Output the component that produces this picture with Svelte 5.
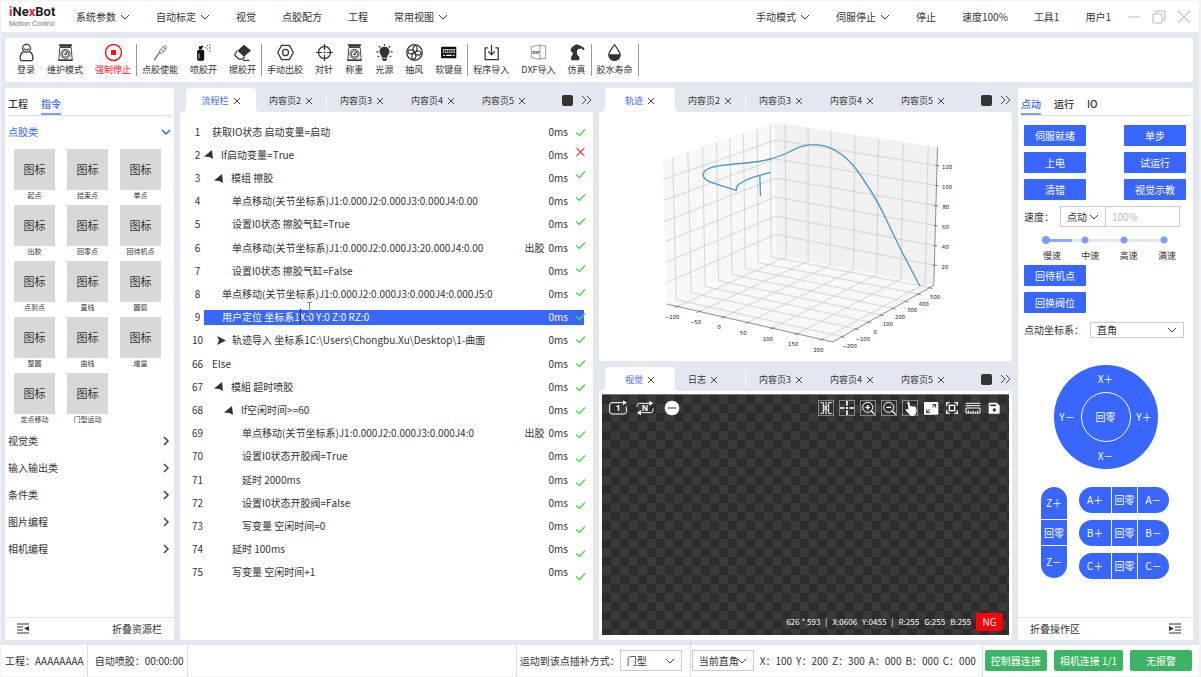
<script>
  const commands = ['起点', '结束点', '单点', '出胶', '回零点', '回待机点', '点到点', '直线', '圆弧', '整圆', '曲线', '增量', '定点移动', '门型运动'];
  const categories = ['视觉类', '输入输出类', '条件类', '图片编程', '相机编程'];

  const menuLeft = [
    { label: '系统参数', drop: true },
    { label: '自动标定', drop: true },
    { label: '视觉' },
    { label: '点胶配方' },
    { label: '工程' },
    { label: '常用视图', drop: true }
  ];
  const menuRight = [
    { label: '手动模式', drop: true },
    { label: '伺服停止', drop: true },
    { label: '停止' },
    { label: '速度100%' },
    { label: '工具1' },
    { label: '用户1' }
  ];

  const toolGroups = [
    [['user', '登录'], ['scale', '维护模式'], ['stop', '强制停止']],
    [['whisk', '点胶使能'], ['spray', '喷胶开'], ['eraser', '擦胶开']],
    [['hex', '手动出胶'], ['target', '对针'], ['scale', '称重'], ['bulb', '光源'], ['fan', '抽风'], ['keyboard', '软键盘']],
    [['import', '程序导入'], ['dxf', 'DXF导入'], ['robot', '仿真']],
    [['drop', '胶水寿命']]
  ];

  const steps = [
    { no: 1, level: 0, text: '获取IO状态 启动变量=启动' },
    { no: 2, level: 1, arrow: 'open', text: 'lf启动变量=True', fail: true },
    { no: 3, level: 2, arrow: 'open', text: '模组 擦胶' },
    { no: 4, level: 2, text: '单点移动(关节坐标系)J1:0.000J2:0.000J3:0.000J4:0.00' },
    { no: 5, level: 2, text: '设置I0状态 擦胶气缸=True' },
    { no: 6, level: 2, text: '单点移动(关节坐标系)J1:0.000J2:0.000J3:20.000J4:0.00', glue: true },
    { no: 7, level: 2, text: '设置I0状态 擦胶气缸=False' },
    { no: 8, level: 1, text: '单点移动(关节坐标系)J1:0.000J2:0.000J3:0.000J4:0.000J5:0' },
    { no: 9, level: 1, text: '用户定位 坐标系1', rest: 'X:0 Y:0 Z:0 RZ:0', selected: true },
    { no: 10, level: 2, arrow: 'closed', text: '轨迹导入 坐标系1C:\\Users\\Chongbu.Xu\\Desktop\\1-曲面' },
    { no: 66, level: 0, text: 'Else' },
    { no: 67, level: 2, arrow: 'open', text: '模組 超时喷胶' },
    { no: 68, level: 3, arrow: 'open', text: 'lf空闲时间>=60' },
    { no: 69, level: 3, text: '单点移动(关节坐标系)J1:0.000J2:0.000J3:0.000J4:0', glue: true },
    { no: 70, level: 3, text: '设置I0状态开胶阀=True' },
    { no: 71, level: 3, text: '延时 2000ms' },
    { no: 72, level: 3, text: '设置I0状态开胶阀=False' },
    { no: 73, level: 3, text: '写变量 空闲时间=0' },
    { no: 74, level: 2, text: '延时 100ms' },
    { no: 75, level: 2, text: '写变量 空闲时间+1' }
  ];

  const leftWall = [[220, 230], [265, 275], [309, 317], [351, 357], [391, 397], [432, 437], [473, 476], [512, 515]];
  const rightWall = [[557, 560], [626, 626], [695, 692], [766, 762], [837, 832], [911, 905], [986, 977]];
  const zLines = [[192, 275, 156, 1013, 233], [194, 337, 213, 1011, 293], [196, 400, 270, 1009, 353], [198, 461, 327, 1008, 413], [199, 523, 384, 1006, 473], [200, 585, 439, 1005, 532]];
  const frontX = [[233, 656], [300, 671], [372, 688], [445, 704], [518, 721], [593, 738], [668, 755]];
  const frontY = [[728, 746], [770, 723], [808, 702], [845, 681], [881, 661], [919, 640], [957, 618], [991, 599]];
  const topLeft = (x) => 217 - (x - 190) * 0.3353;
  const bottomLeft = (x) => 648 - (x - 201) * 0.451;
  const topRight = (x) => 104 + (x - 527) * 0.152;
  const bottomRight = (x) => 500 + (x - 529) * 0.194;
  const axisLabels = [
    ['−100', 218, 692], ['−50', 288, 707], ['0', 359, 723], ['50', 431, 740], ['100', 505, 758], ['150', 581, 775], ['200', 657, 793],
    ['−200', 750, 781], ['−100', 790, 759], ['0', 827, 737], ['100', 865, 715], ['200', 902, 693], ['300', 938, 672], ['400', 973, 653], ['500', 1007, 634],
    ['120', 1043, 242], ['100', 1043, 303], ['80', 1039, 363], ['60', 1038, 423], ['40', 1037, 483], ['20', 1036, 542]
  ];

  const jogRows = ['A', 'B', 'C'];
  const camTools = ['镜像', '十字线', '放大', '缩小', '平移', '适应窗口', '对焦', '测量', '保存'];
  const coords = ['X：100', 'Y：200', 'Z：300', 'A：000', 'B：000', 'C：000'];
</script>

{#snippet chevron()}
  <svg class="chev" viewBox="0 0 10 10" aria-hidden="true"><path d="M1 3l4 4 4-4" /></svg>
{/snippet}

{#snippet cross()}
  <svg class="cross" viewBox="0 0 8 8" aria-hidden="true"><path d="M1 1l6 6M7 1l-6 6" /></svg>
{/snippet}

{#snippet tabStrip(tabs)}
  <div class="strip">
    {#each tabs as name, i}
      <div class="tab" class:active={i === 0} class:split={i === 1}>
        <button>{name}</button>
        <button aria-label="关闭">{@render cross()}</button>
      </div>
    {/each}
    <div class="strip-end">
      <button class="block" aria-label="单窗口"></button>
      <button aria-label="更多"><svg class="more" viewBox="0 0 11 10" aria-hidden="true"><path d="M1 1l4 4-4 4M6 1l4 4-4 4" /></svg></button>
    </div>
  </div>
{/snippet}

{#snippet select(label, value)}
  <span class="select">
    <select aria-label={label}><option>{value}</option></select>
    {@render chevron()}
  </span>
{/snippet}

{#snippet toolIcon(name)}
  <svg class="tool-icon" viewBox="0 0 48 48" aria-hidden="true">
    {#if name === 'user'}
      <g class="ln"><circle cx="24" cy="12" r="11" /><path d="M17 13q7 7 14 0M16 22C9 24 6 33 6 40q0 7 6 7h24q6 0 6-7c0-7-3-16-10-18" /></g>
    {:else if name === 'scale'}
      <g class="ln thin"><path d="M6 2h36l-4 6H10zM8 10h32l3 36H5z" /><circle cx="24" cy="28" r="13" /><circle cx="24" cy="28" r="9" /><path d="M24 29l6-8M14 8v3M34 8v3" stroke-width="3" /></g>
      <path d="M6 2h36l-3 5H9zM4 44h40v4H4z" /><circle cx="24" cy="29" r="3" />
    {:else if name === 'stop'}
      <circle cx="24" cy="24" r="22.5" fill="none" stroke="#ff0d16" stroke-width="4" /><rect x="17" y="17" width="14" height="14" fill="#ff0d16" />
    {:else if name === 'whisk'}
      <g class="ln hair"><path d="M6 46l13-19" stroke-width="4" /><path d="M19 27c0-8 10-18 18-22 4 0 5 3 4 6-3 9-12 18-22 16zM19 27C22 17 30 8 38 5M19 27c9-2 17-10 21-18M26 15l8 7M31 9l7 6" /></g>
    {:else if name === 'spray'}
      <path d="M6 21q0-5 5-5h10q5 0 5 5v22q0 4-4 4H10q-4 0-4-4zM11 6h9v9h-9zM18 5h5v5h-5z" fill="#111" />
      <path d="M10 27h3v14h-3z" fill="#bbb" />
      <g fill="#777"><circle cx="29" cy="10" r="2.3" /><circle cx="35" cy="5" r="2.3" /><circle cx="35" cy="14" r="2.3" /><circle cx="42" cy="3" r="2.3" /><circle cx="42" cy="11" r="2.3" /><circle cx="42" cy="20" r="2.3" /></g>
    {:else if name === 'eraser'}
      <path d="M28 2L48 18 28 36 10 19z" /><path class="ln" d="M9 19L3 28q-1 3 1 5l10 10h10l6-7M26 46h17" />
    {:else if name === 'hex'}
      <path class="ln" d="M13 4h22l11 20-11 20H13L2 24z" stroke-linejoin="round" /><circle class="ln" cx="24" cy="24" r="8.5" />
    {:else if name === 'target'}
      <circle class="ln" cx="24" cy="24" r="17" /><path class="ln" d="M24 0v17M24 31v17M0 24h17M31 24h17" /><circle cx="24" cy="24" r="3" />
    {:else if name === 'bulb'}
      <path d="M24 8c8 0 14 6 14 13 0 6-4 9-6 14v4H16v-4c-2-5-6-8-6-14C10 14 16 8 24 8zM17 41h14v3l-4 4h-6l-4-4z" />
      <path class="ln" d="M24 0v5M8 6l4 4M40 6l-4 4M1 22h6M41 22h6M5 37l4-3M43 37l-4-3" />
    {:else if name === 'fan'}
      <circle class="ln" cx="24" cy="24" r="22" /><g class="ln"><path d="M24 22C18 16 18 8 26 5c8 2 6 10 2 17M26 24c6-6 14-6 17 2-2 8-10 6-17 2M24 26c6 6 6 14-2 17-8-2-6-10-2-17M22 24C16 30 8 30 5 22c2-8 10-6 17-2" /></g><circle cx="24" cy="24" r="4" />
    {:else if name === 'keyboard'}
      <rect x="3" y="8" width="43" height="32" rx="2" fill="#111" />
      <path d="M8 16h34M8 23h34" stroke="#fff" stroke-width="4" stroke-dasharray="4 2" /><path d="M9 32h5M17 32h16M36 32h5" stroke="#fff" stroke-width="4" />
    {:else if name === 'import'}
      <path class="ln" d="M14 11H6v33h37V11h-8M24 2v27M15 21l9 9 9-9" />
    {:else if name === 'dxf'}
      <g class="ln hair"><path d="M4 8l24-6v42L4 38zM28 5h16v36H28" /></g><text x="6" y="28" font-size="11" font-weight="700">DXF</text>
    {:else if name === 'robot'}
      <path d="M14 6l10-5 10 3 12 7v5l-4 1-3-4-10 1-4 6 1 10 6 6v10H9V36l5-8-3-6-4-2 2-8z" />
    {:else if name === 'drop'}
      <path class="ln" d="M24 2C17 13 8 21 8 31a16 15 0 0 0 32 0C40 21 31 13 24 2z" /><path d="M8 29h32c1 11-7 18-16 18S7 40 8 29z" />
    {/if}
  </svg>
{/snippet}

{#snippet camIcon(i)}
  <svg class="cam-icon" viewBox="0 0 48 48" aria-hidden="true">
    {#if i < 5}<rect x="1" y="1" width="46" height="46" class="frame" />{/if}
    {#if i === 0}
      <path d="M7 8h9v32H7M41 8h-9v32h9M24 5v38M16 16l14 16M30 16L16 32" />
    {:else if i === 1}
      <path d="M24 3v14M24 31v14M3 24h14M31 24h14M24 21v6M21 24h6" stroke-width="5" />
    {:else if i === 2}
      <circle cx="23" cy="22" r="15" /><path d="M34 33l10 11M16 22h14M23 15v14" stroke-width="4" />
    {:else if i === 3}
      <circle cx="23" cy="22" r="15" /><path d="M34 33l10 11M16 22h14" stroke-width="4" />
    {:else if i === 4}
      <path class="solid" d="M16 6q4-3 6 1l3 13 4-2 4 2 5-1 3 3 3 9-2 10-6 6H26L12 32q-3-4 1-6l7 3z" />
    {:else if i === 5}
      <rect class="solid" x="3" y="6" width="43" height="38" rx="3" /><path class="cut" d="M28 14h10v9M38 14L28 22M11 28v9h10M11 37l9-8" />
    {:else if i === 6}
      <path d="M8 17V8h9M31 8h9v9M40 31v9h-9M17 40H8v-9" stroke-width="4" /><rect x="16" y="16" width="16" height="16" stroke-width="4" />
    {:else if i === 7}
      <path d="M2 10h44M2 17h44M3 24h42v15H3zM10 31v8M17 34v5M24 31v8M31 34v5M38 31v8" />
    {:else}
      <path class="solid" d="M8 8h24l9 9v24H8z" /><path class="cut" d="M13 16h17" stroke-width="5" /><circle class="hole" cx="25" cy="30" r="5" />
    {/if}
  </svg>
{/snippet}

<div class="app">
  <header>
    <div class="logo">
      <strong><i>i</i>Ne<i>x</i>Bot</strong>
      <small>Motion Control</small>
    </div>
    <nav>
      {#each menuLeft as item}
        <button class="menu">{item.label}{#if item.drop}{@render chevron()}{/if}</button>
      {/each}
    </nav>
    <nav class="right">
      {#each menuRight as item}
        <button class="menu">{item.label}{#if item.drop}{@render chevron()}{/if}</button>
      {/each}
    </nav>
    <div class="window">
      <button aria-label="最小化"><svg viewBox="0 0 14 14"><path d="M1 7h12" /></svg></button>
      <button aria-label="还原"><svg viewBox="0 0 14 14"><path d="M1 4h9v9H1zM4 4V1h9v9h-3" /></svg></button>
      <button aria-label="关闭"><svg viewBox="0 0 14 14"><path d="M1 1l12 12M13 1L1 13" /></svg></button>
    </div>
  </header>

  <main>
    <section class="toolbar">
      {#each toolGroups as group}
        <div class="group">
          {#each group as [icon, label]}
            <button class="tool" class:danger={icon === 'stop'}>{@render toolIcon(icon)}<span>{label}</span></button>
          {/each}
        </div>
      {/each}
    </section>

    <div class="columns">
      <aside class="card">
        <div class="side-tabs">
          <button>工程</button>
          <button class="on">指令</button>
        </div>
        <button class="cat open">点胶类<svg class="cat-arrow" viewBox="0 0 10 10" aria-hidden="true"><path d="M1 3l4 4 4-4" /></svg></button>
        <div class="tiles">
          {#each commands as c}
            <button class="tile"><b>图标</b><span>{c}</span></button>
          {/each}
        </div>
        {#each categories as c}
          <button class="cat">{c}<svg class="cat-arrow" viewBox="0 0 10 10" aria-hidden="true"><path d="M3 1l4 4-4 4" /></svg></button>
        {/each}
        <button class="fold">
          <svg viewBox="0 0 12 12" aria-hidden="true"><path d="M0 1h12M0 4h6M0 7h6M0 10h12" /><path class="tri" d="M12 3v5L7 5.500z" /></svg>
          折叠资源栏
        </button>
      </aside>

      <section class="panel">
        {@render tabStrip(['流程栏', '内容页2', '内容页3', '内容页4', '内容页5'])}
        <div class="body program">
          <div class="rows">
            {#each steps as s}
              <div class="row" class:selected={s.selected}>
                <span class="no">{s.no}</span>
                <div class="line" class:arrowed={s.arrow} style:--level={s.level}>
                  {#if s.arrow === 'open'}
                    <svg class="arrow" viewBox="0 0 9 9" aria-hidden="true"><path d="M8 0l1 9-3.500-2L0 6.500z" /></svg>
                  {:else if s.arrow}
                    <svg class="arrow closed" viewBox="0 0 9 9" aria-hidden="true"><path d="M0 0l9 4.500L0 9l2-4.500z" /></svg>
                  {/if}
                  <span class="text">{s.text}{#if s.rest}<span class="caret"><svg viewBox="0 0 5 14" aria-hidden="true"><path d="M0 .5h5M2.500 0v14M0 13.500h5" /></svg></span>{s.rest}{/if}</span>
                  {#if s.glue}<span class="glue">出胶</span>{/if}
                  <span class="ms">0ms</span>
                </div>
              </div>
            {/each}
          </div>
          <div class="states">
            {#each steps as s, i}
              <span class:early={i < 2}>
                {#if s.fail}
                  <svg class="bad" viewBox="0 0 10 10" role="img" aria-label="失败"><path d="M1 1l8 8M9 1L1 9" /></svg>
                {:else}
                  <svg class="good" viewBox="0 0 10 10" role="img" aria-label="完成"><path d="M.5 5.500L4 8.500l5.500-6" /></svg>
                {/if}
              </span>
            {/each}
          </div>
        </div>
      </section>

      <div class="stack">
        <section class="panel">
          {@render tabStrip(['轨迹', '内容页2', '内容页3', '内容页4', '内容页5'])}
          <div class="body">
            <svg class="plot" viewBox="0 72 1236 744" role="img" aria-label="轨迹">
              <path class="wall" d="M190 217L527 104l2 396-328 148z" />
              <path class="wall dark" d="M527 104l487 74-11 414-474-92z" />
              <path class="wall" d="M201 648l328-148 474 92-303 170z" />
              <g class="gridlines">
                {#each leftWall as [a, b], i}
                  <path d="M{a} {topLeft(a)}L{b} {bottomLeft(b)}L{frontY[i][0]} {frontY[i][1]}" />
                {/each}
                {#each rightWall as [a, b], i}
                  <path d="M{a} {topRight(a)}L{b} {bottomRight(b)}L{frontX[i][0]} {frontX[i][1]}" />
                {/each}
                {#each zLines as [lx, ly, my, rx, ry]}
                  <path d="M{lx} {ly}L528 {my}L{rx} {ry}" />
                {/each}
              </g>
              <path class="axis" d="M201 648l499 114 303-170 11-414" />
              {#each frontX as [x, y]}<path class="axis" d="M{x + 5} {y - 3}l-12 6" />{/each}
              {#each frontY as [x, y]}<path class="axis" d="M{x - 4} {y - 1}l12 4" />{/each}
              {#each zLines as z}<path class="axis" d="M{z[3] - 5} {z[4] - 1}l12 2" />{/each}
              <path class="curve" d="M961 594L905 487C880 435 866 408 850 373C826 325 800 285 770 243C735 200 690 170 645 170C590 170 570 200 512 213C470 225 420 226 378 231C335 235 310 246 311 262C316 283 345 285 410 307C412 296 410 292 420 288C440 274 455 268 481 262L512 253M481 262L483 324" />
              {#each axisLabels as [t, x, y]}<text {x} {y}>{t}</text>{/each}
            </svg>
          </div>
        </section>

        <section class="panel">
          {@render tabStrip(['视觉', '日志', '内容页3', '内容页4', '内容页5'])}
          <div class="body cam-body">
            <div class="camera">
              <div class="cam-bar">
                <button aria-label="单次运行"><svg class="loop" viewBox="0 0 54 48"><path d="M44 8H9q-7 0-7 7v20q0 7 7 7h36q7 0 7-7V20" /><path class="solid" d="M42 1l12 7-12 7z" /><text x="27" y="33">1</text></svg></button>
                <button aria-label="连续运行"><svg class="loop" viewBox="0 0 54 48"><path d="M3 21v-4q0-7 8-7h32M51 25v6q0 7-8 7H12" /><path class="solid" d="M40 2l12 8-12 7zM15 30L3 38l12 8z" /><text x="27" y="33">N</text></svg></button>
                <button aria-label="清除"><svg class="loop" viewBox="0 0 54 48"><circle class="solid" cx="27" cy="24" r="22" /><path class="cut" d="M15 24h24" /></svg></button>
                <div class="cam-tools">
                  {#each camTools as t, i}<button aria-label={t}>{@render camIcon(i)}</button>{/each}
                </div>
              </div>
              <div class="cam-info">
                <span>626 * 593</span><span>|</span><span>X:0606</span><span>Y:0455</span><span>|</span><span>R:255</span><span>G:255</span><span>B:255</span>
                <strong>NG</strong>
              </div>
            </div>
          </div>
        </section>
      </div>

      <aside class="card control">
        <div class="side-tabs">
          <button class="on">点动</button>
          <button>运行</button>
          <button>IO</button>
        </div>
        <div class="pairs">
          <button>伺服就绪</button><button>单步</button>
          <button>上电</button><button>试运行</button>
          <button>清错</button><button>视觉示教</button>
        </div>
        <div class="speed">
          <label for="rate">速度：</label>
          {@render select('速度模式', '点动')}
          <input id="rate" placeholder="100%" />
        </div>
        <div class="slider">
          <input type="range" min="0" max="3" value="0" aria-label="速度档位" />
          <div class="marks"><span>慢速</span><span>中速</span><span>高速</span><span>满速</span></div>
        </div>
        <div class="pairs"><button>回待机点</button><i></i><button>回换阀位</button></div>
        <div class="frame-row">
          <span>点动坐标系：</span>
          {@render select('点动坐标系', '直角')}
        </div>
        <div class="dial">
          <button class="n">X＋</button>
          <button class="w">Y－</button>
          <button class="c">回零</button>
          <button class="e">Y＋</button>
          <button class="s">X－</button>
        </div>
        <div class="jogs">
          <div class="jog-z"><button>Z＋</button><button>回零</button><button>Z－</button></div>
          <div class="jog-list">
            {#each jogRows as a}
              <div class="jog"><button>{a}＋</button><button>回零</button><button>{a}－</button></div>
            {/each}
          </div>
        </div>
        <button class="fold">
          折叠操作区
          <svg viewBox="0 0 12 12" aria-hidden="true"><path d="M0 1h12M6 4h6M6 7h6M0 10h12" /><path class="tri" d="M0 3v5l5-2.500z" /></svg>
        </button>
      </aside>
    </div>
  </main>

  <footer>
    <span class="cell">工程：AAAAAAAA</span>
    <span class="cell wide">自动喷胶：00:00:00</span>
    <div class="cell motion"><span>运动到该点插补方式：</span>{@render select('插补方式', '门型')}</div>
    <div class="cell position">
      {@render select('坐标系', '当前直角')}
      <div class="coords">{#each coords as c}<span>{c}</span>{/each}</div>
    </div>
    <div class="links">
      <button>控制器连接</button>
      <button>相机连接 1/1</button>
      <button>无报警</button>
    </div>
  </footer>
</div>

<style>
  :global(body) { background: #f1f2f4; }
  .app {
    --blue: #3866ff;
    --bg: #e3e8f0;
    box-sizing: border-box;
    display: flex;
    flex-direction: column;
    min-height: 100vh;
    padding: 1px 2px 1px 1px;
    background: #f1f2f4;
    color: #333;
    font: 10px/14px "Noto Sans CJK SC", "Noto Sans", sans-serif;
    font-kerning: none;
  }
  .app :is(button, input, select) {
    box-sizing: border-box;
    margin: 0;
    padding: 0;
    border: 0;
    background: none;
    color: inherit;
    font: inherit;
    font-kerning: none;
    white-space: nowrap;
  }
  svg { display: block; flex: none; }
  .chev, .cross, .more, .cat-arrow { fill: none; stroke: #444; stroke-width: 1; }
  .chev { width: 10px; height: 10px; }
  .cross { width: 8px; height: 8px; }

  header { display: flex; align-items: center; height: 31px; padding: 0 8px; background: #fff; }
  .logo { display: flex; flex-direction: column; width: 67px; margin-bottom: 2px; color: #222; }
  .logo strong { font: 700 13px/16px Roboto, sans-serif; }
  .logo i { color: #e8202a; font-style: normal; }
  .logo small { color: #777; font: 7px/8px "Liberation Sans", sans-serif; }
  nav { display: flex; gap: 26px; }
  nav.right { margin-left: auto; }
  .app .menu { display: flex; align-items: center; gap: 4px; }
  .window { display: flex; gap: 11px; margin-left: 16px; }
  .window svg { width: 14px; height: 14px; fill: none; stroke: #bbb; }

  main { display: flex; flex: 1; flex-direction: column; gap: 6px; padding: 6px 6px 5px 4px; background: var(--bg); }
  .toolbar { display: flex; align-items: center; height: 44px; padding-left: 7px; border-radius: 2px; background: #fff; }
  .group { display: flex; gap: 12px; height: 32px; padding: 0 5px; border-right: 1px solid #999; }
  .app .tool { display: flex; flex-direction: column; align-items: center; gap: 3px; font-size: 9px; line-height: 12px; }
  .tool-icon { width: 17px; height: 17px; overflow: visible; fill: #333; }
  .ln { fill: none; stroke: #333; stroke-width: 3.500; }
  .thin { stroke-width: 2.500; }
  .hair { stroke: #777; stroke-width: 2; }
  .app .danger { color: #ff0d16; }

  .columns { display: grid; flex: 1; grid-template-columns: 169px minmax(0, 1fr) minmax(0, 1fr) 175px; gap: 6px; }
  .card { display: flex; flex-direction: column; border-radius: 2px; background: #fff; }
  .side-tabs { display: flex; gap: 13px; margin: 0 3px; padding-top: 8px; border-bottom: 1px solid #ddd; }
  .app .side-tabs button { height: 19px; padding-bottom: 1px; border-bottom: 2px solid transparent; font-weight: 500; }
  .app .side-tabs .on { border-color: #7f9dff; color: var(--blue); }
  .app .cat { display: flex; align-items: center; justify-content: space-between; height: 27px; padding: 0 3px; }
  .app .cat.open { height: 32px; color: var(--blue); }
  .cat-arrow { width: 10px; height: 10px; stroke-width: 1.500; }
  .open .cat-arrow { stroke: var(--blue); }
  .tiles { display: grid; grid-template-columns: repeat(3, 41px); justify-content: space-between; row-gap: 5px; margin: 1px 13px 3px 9px; }
  .app .tile { display: flex; flex-direction: column; align-items: center; height: 51px; font-size: 7px; line-height: 10px; }
  .tile b { width: 41px; height: 41px; background: #d8d8d8; font-size: 11px; font-weight: 400; line-height: 41px; }
  .app .fold { display: flex; align-items: center; justify-content: space-between; height: 23px; margin-top: auto; padding: 0 12px 1px; border-top: 1px solid #e4e6ea; }
  .fold svg { width: 12px; height: 12px; fill: none; stroke: #333; }
  .fold .tri { fill: #333; stroke: none; }

  .stack { display: flex; flex-direction: column; gap: 6px; }
  .stack .panel { flex: 1; }
  .panel { display: flex; flex-direction: column; min-width: 0; }
  .strip { display: flex; height: 24px; padding-left: 6px; font-size: 9px; }
  .tab { position: relative; box-sizing: border-box; display: flex; flex: 0 1 71px; align-items: center; gap: 4px; padding: 2px 0 0 13px; }
  .tab.active { flex-basis: 70px; justify-content: center; padding-left: 0; border-radius: 4px 4px 0 0; background: #fff; color: var(--blue); }
  .tab.active::before, .tab.active::after { position: absolute; bottom: 0; width: 4px; height: 4px; content: ""; }
  .tab.active::before { right: 100%; background: radial-gradient(circle at 0 0, transparent 4px, #fff 4px); }
  .tab.active::after { left: 100%; background: radial-gradient(circle at 100% 0, transparent 4px, #fff 4px); }
  .tab.split::after { position: absolute; top: 5px; right: 0; width: 1px; height: 15px; background: #f7f8fa; content: ""; }
  .strip-end { display: flex; align-items: center; gap: 8px; margin-left: auto; padding-right: 1px; }
  .app .block { width: 11px; height: 11px; border-radius: 2px; background: #333; }
  .more { width: 11px; height: 10px; }
  .body { flex: 1; min-height: 0; border-radius: 2px; background: #fff; }

  .program { display: grid; padding: 8px 0 56px; }
  .rows, .states { display: flex; grid-area: 1 / 1; flex-direction: column; }
  .row { display: flex; flex: 1; align-items: center; padding-right: 9px; }
  .no { width: 13px; padding-left: 11px; text-align: center; }
  .line { display: flex; flex: 1; align-items: center; height: 15px; padding: 0 16px 0 calc(8px + var(--level) * 10px); white-space: nowrap; }
  .line.arrowed { padding-left: calc((var(--level) - 1) * 10px); }
  .arrow { width: 9px; height: 9px; margin-right: 8px; fill: #333; }
  .arrow.closed { margin: 0 6px 0 3px; }
  .text { flex: 1; }
  .glue { margin-right: 4px; }
  .selected .line { background: var(--blue); color: #fff; }
  .caret { position: relative; border-left: 1px solid #334; margin-right: -1px; }
  .caret svg { position: absolute; top: -7px; left: 6px; width: 5px; height: 14px; fill: none; stroke: #888; }
  .states { justify-self: end; width: 18px; margin: 2px 0 -4px; }
  .states span { display: flex; flex: 237 1 0; align-items: center; }
  .states .early { flex-grow: 200; }
  .states svg { width: 11px; height: 10px; fill: none; stroke: #4ad64f; stroke-width: 1.300; }
  .states .bad { stroke: #f04a4a; stroke-width: 1.200; }

  .plot { width: 100%; height: 248px; min-height: 0; }
  .wall { fill: #f8f8f8; }
  .wall.dark { fill: #f1f1f1; }
  .gridlines { fill: none; stroke: #c4c4c4; stroke-width: 2; }
  .axis { fill: none; stroke: #555; stroke-width: 2; }
  .curve { fill: none; stroke: #4c97cb; stroke-width: 4; }
  .plot text { fill: #222; font: 16px "DejaVu Sans", sans-serif; text-anchor: middle; }

  .cam-body { display: flex; padding: 3px 3px 5px; }
  .camera {
    display: flex;
    flex: 1;
    flex-direction: column;
    justify-content: space-between;
    border-top: 1px solid #777;
    background: repeating-conic-gradient(#3a3a3a 0 25%, #2d2d2d 0 50%) 0 0 / 18px 18px;
    color: #fff;
  }
  .cam-bar { display: flex; gap: 9px; padding: 5px 7px; }
  .cam-tools { display: flex; gap: 5px; margin-left: auto; }
  .loop { width: 18px; height: 16px; }
  .cam-icon { width: 16px; height: 16px; }
  .loop, .cam-icon { fill: none; stroke: #fff; stroke-width: 3; }
  .loop text { fill: #fff; stroke: none; font: 700 24px "Noto Sans", sans-serif; text-anchor: middle; }
  .frame { stroke: #aaa; stroke-width: 2; }
  .solid { fill: #fff; stroke: none; }
  .cut { fill: none; stroke: #2d2d2d; }
  .hole { fill: #2d2d2d; stroke: none; }
  .cam-info { display: flex; align-items: center; justify-content: flex-end; gap: 5px; padding: 3px 6px 4px; font-size: 8px; }
  .cam-info strong { width: 27px; border-radius: 1px; background: red; font-size: 10px; font-weight: 400; line-height: 18px; text-align: center; }

  .pairs { display: grid; grid-template-columns: 62px 62px; justify-content: space-between; gap: 6px; padding: 0 7px 0 6px; }
  .side-tabs + .pairs { padding-top: 9px; }
  .app .pairs button { height: 21px; border-radius: 1px; background: var(--blue); color: #fff; }
  .pairs button:last-child:nth-child(3) { grid-column: 1; }
  .speed { display: flex; height: 21px; margin: 6px 13px 0 6px; align-items: center; }
  .speed label { flex: 1; }
  .select { display: grid; align-items: center; height: 21px; }
  .select > :global(*) { grid-area: 1 / 1; }
  .select .chev { justify-self: end; margin-right: 7px; pointer-events: none; }
  .app .select select { width: 100%; height: 100%; padding: 0 6px; border: 1px solid #ccc; appearance: none; }
  .speed .select { width: 46px; }
  .app .speed input { width: 75px; height: 21px; margin-left: -1px; padding: 0 6px; border: 1px solid #ccc; }
  .speed input::placeholder { color: #bbb; opacity: 1; }
  .slider { margin: 9px 13px 2px 24px; font-size: 9px; }
  .app .slider input {
    display: block;
    width: 126px;
    height: 8px;
    appearance: none;
    background:
      radial-gradient(circle at 43px 4px, #7c9fff 3px, transparent 4px),
      radial-gradient(circle at 82px 4px, #7c9fff 3px, transparent 4px),
      radial-gradient(circle at 122px 4px, #7c9fff 3px, transparent 4px),
      linear-gradient(#8aa9ff, #8aa9ff) 4px 3px / 26px 3px no-repeat,
      linear-gradient(#e3e8f2, #e3e8f2) 4px 3px / 118px 3px no-repeat;
  }
  .slider input::-webkit-slider-thumb { width: 8px; height: 8px; border-radius: 50%; appearance: none; background: #7c9fff; }
  .marks { display: flex; justify-content: space-between; padding: 5px 4px 0 1px; }
  .frame-row { display: flex; align-items: center; justify-content: space-between; margin: 9px 9px 0 6px; }
  .frame-row .select { width: 94px; height: 15px; }
  .dial {
    display: grid;
    grid-template-columns: 27px 50px 27px;
    grid-template-rows: 27px 50px 27px;
    align-self: center;
    margin: 28px 0 18px;
    border-radius: 50%;
    background: var(--blue);
    color: #fff;
  }
  .n, .s { grid-column: 2; }
  .w, .c, .e { grid-row: 2; }
  .app .dial .c { border: 1px solid #fff; border-radius: 50%; }
  .jogs { display: flex; gap: 12px; margin-left: 23px; }
  .jog-z { display: grid; grid-template-rows: 32px 25px 32px; gap: 1px; width: 26px; }
  .jog-list { display: grid; gap: 7px; }
  .jog { display: grid; grid-template-columns: 32px 25px 31px; gap: 1px; height: 26px; }
  .app .jogs button { overflow: hidden; background: var(--blue); color: #fff; }
  .app .jog-z button:first-child { border-radius: 13px 13px 0 0; }
  .app .jog-z button:last-child { border-radius: 0 0 13px 13px; }
  .app .jog button:first-child { border-radius: 13px 0 0 13px; }
  .app .jog button:last-child { border-radius: 0 13px 13px 0; }

  footer { display: flex; height: 31px; background: #fff; white-space: nowrap; }
  .cell { display: flex; align-items: center; padding: 0 3px 0 4px; border-right: 1px solid #ddd; }
  .cell.wide { padding-left: 7px; }
  .motion { margin-left: auto; padding: 0 8px 0 3px; border-left: 1px solid #ddd; }
  footer .select { width: 62px; }
  .position { gap: 6px; padding: 0 6px 0 1px; }
  .coords { display: flex; gap: 4px; }
  .links { display: flex; align-items: center; gap: 7px; padding: 0 7px 0 2px; }
  .app .links button { min-width: 62px; height: 21px; padding: 0 6px; border-radius: 2px; background: #3cb463; color: #fff; }
</style>
